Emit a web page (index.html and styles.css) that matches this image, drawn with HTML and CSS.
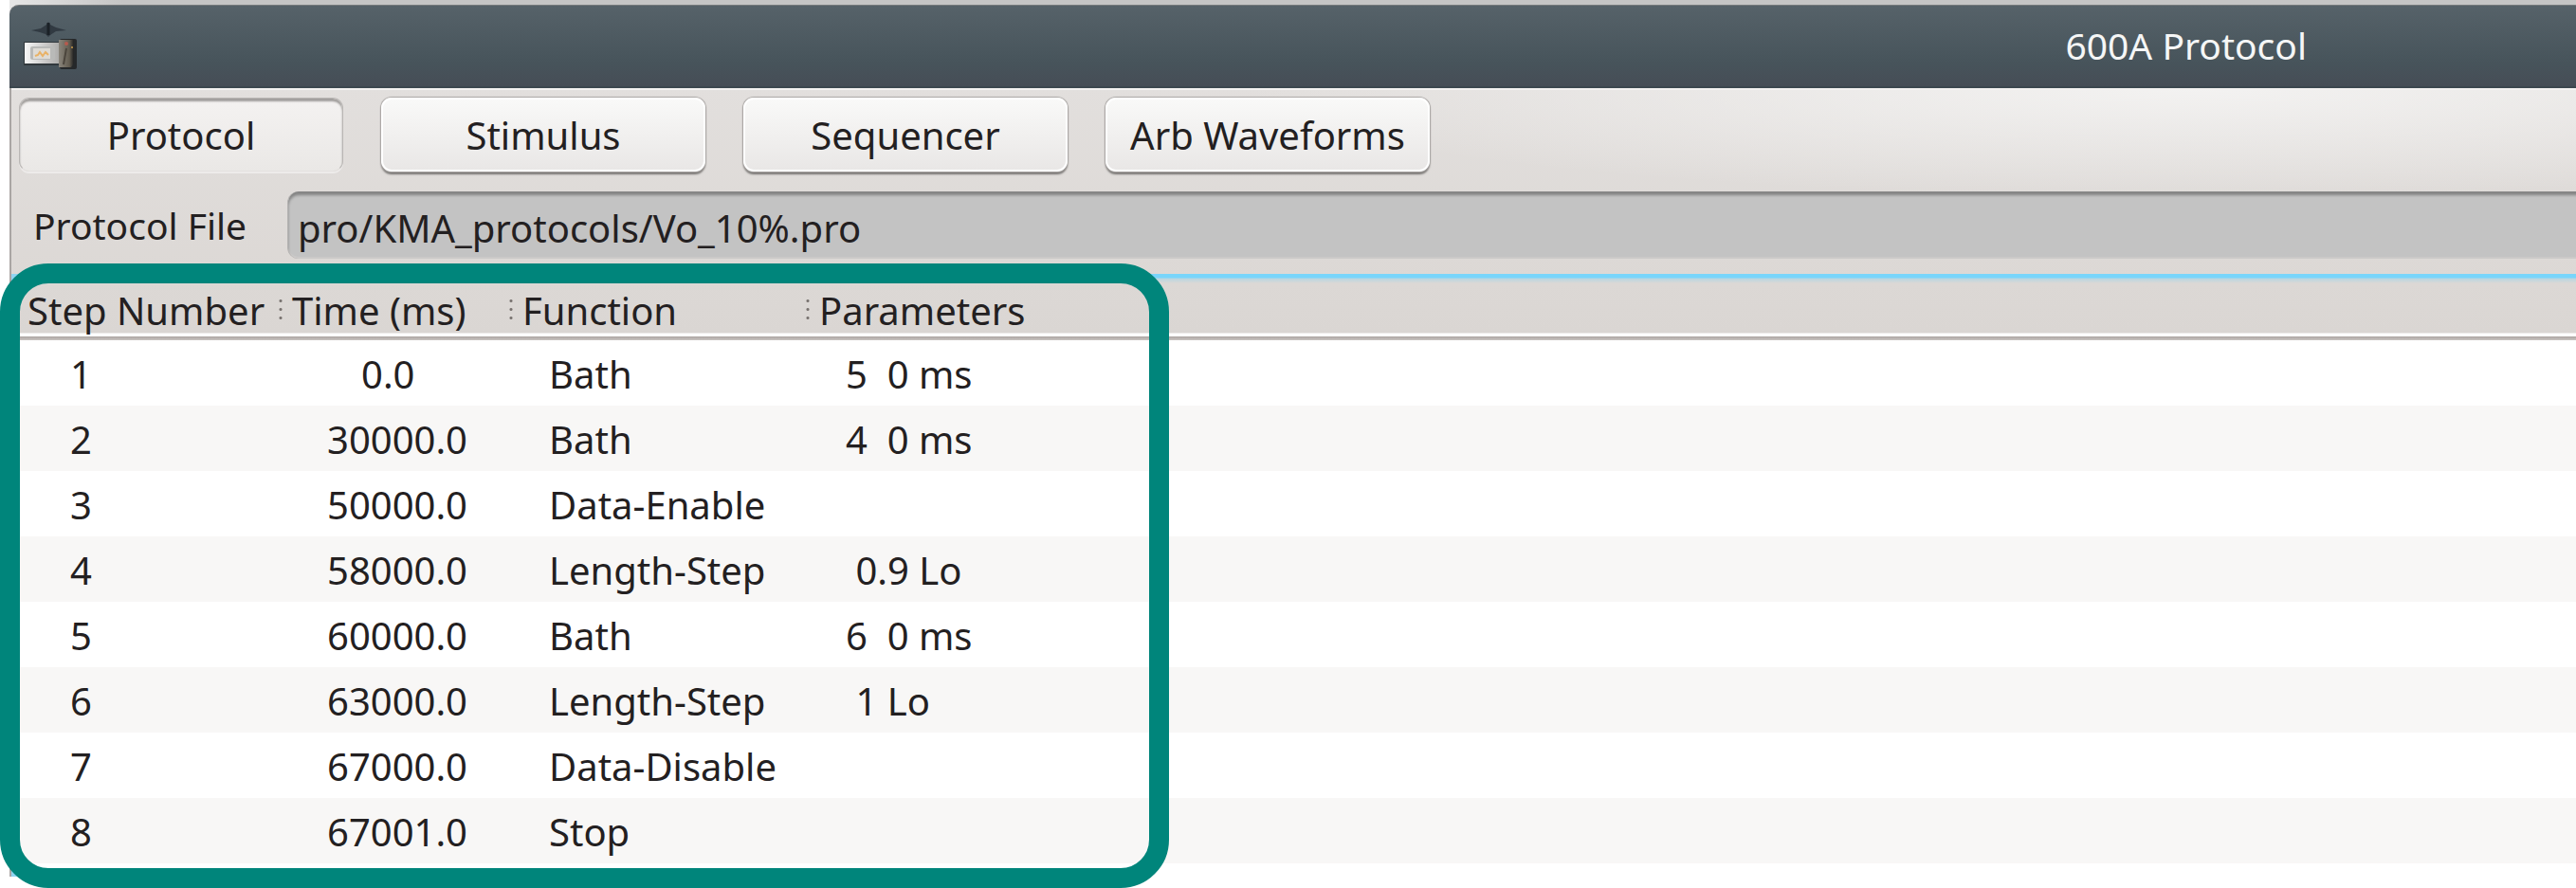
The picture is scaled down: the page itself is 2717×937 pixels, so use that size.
FILE: index.html
```html
<!DOCTYPE html>
<html lang="en">
<head>
    <meta charset="UTF-8">
    <meta name="viewport" content="width=device-width, initial-scale=1.0">
    <title>600A Protocol</title>
    <link rel="stylesheet" href="styles.css">
</head>
<body>
    <div class="desktop">
        <div class="window">
            <header class="titlebar">
                <svg class="app-icon" viewBox="0 0 60 52" aria-hidden="true">
                    <defs>
                        <linearGradient id="case" x1="0" y1="0" x2="1" y2="0">
                            <stop offset="0" stop-color="#f7f7f7"/>
                            <stop offset="1" stop-color="#aaa9a7"/>
                        </linearGradient>
                        <linearGradient id="motor" x1="0" y1="0" x2="1" y2="0">
                            <stop offset="0" stop-color="#8b867c"/>
                            <stop offset="0.7" stop-color="#625c50"/>
                            <stop offset="1" stop-color="#1f2021"/>
                        </linearGradient>
                    </defs>
                    <path d="M8 10 L18 8 L24 4 L26 1 L28 4 L34 7 L45 10 L34 11 L28 15 L26 17 L23 14 L17 12 Z" fill="#313a42"/>
                    <path d="M26 2 V15" stroke="#1b2127" stroke-width="3"/>
                    <rect x="0" y="22" width="40" height="25" fill="#32393d"/>
                    <rect x="38" y="19" width="18" height="32" rx="2" fill="#25282a"/>
                    <rect x="1" y="23" width="38" height="22" fill="url(#case)"/>
                    <rect x="7" y="27" width="26" height="14" rx="2" fill="#b9bab8"/>
                    <rect x="10" y="29" width="18" height="11" fill="#dedbd5"/>
                    <path d="M12 37 L15 36 L17 33 L20 37 L23 33 L26 36" fill="none" stroke="#e9b266" stroke-width="2"/>
                    <path d="M37 20 H53 V45 L50 49 H37 Z" fill="url(#motor)"/>
                    <path d="M45 29 L42 46" stroke="#4c463d" stroke-width="2"/>
                    <circle cx="45" cy="24" r="2" fill="#b65a4d"/>
                    <circle cx="51" cy="28" r="1" fill="#c99a48"/>
                </svg>
                <h1 class="title">600A Protocol</h1>
            </header>

            <nav class="tabs">
                <button type="button" class="tab active" aria-pressed="true">Protocol</button>
                <button type="button" class="tab">Stimulus</button>
                <button type="button" class="tab">Sequencer</button>
                <button type="button" class="tab">Arb Waveforms</button>
            </nav>

            <div class="file-row">
                <label for="protocol-file">Protocol File</label>
                <input type="text" id="protocol-file" value="pro/KMA_protocols/Vo_10%.pro" readonly>
            </div>

            <section class="list">
                <table class="steps">
                    <colgroup>
                        <col class="col-step">
                        <col class="col-time">
                        <col class="col-function">
                        <col>
                    </colgroup>
                    <thead>
                        <tr><th>Step Number</th><th>Time (ms)</th><th>Function</th><th>Parameters</th></tr>
                    </thead>
                    <tbody>
                        <tr><td>1</td><td class="zero">0.0</td><td>Bath</td><td>5  0 ms</td></tr>
                        <tr><td>2</td><td>30000.0</td><td>Bath</td><td>4  0 ms</td></tr>
                        <tr><td>3</td><td>50000.0</td><td>Data-Enable</td><td></td></tr>
                        <tr><td>4</td><td>58000.0</td><td>Length-Step</td><td> 0.9 Lo</td></tr>
                        <tr><td>5</td><td>60000.0</td><td>Bath</td><td>6  0 ms</td></tr>
                        <tr><td>6</td><td>63000.0</td><td>Length-Step</td><td> 1 Lo</td></tr>
                        <tr><td>7</td><td>67000.0</td><td>Data-Disable</td><td></td></tr>
                        <tr><td>8</td><td>67001.0</td><td>Stop</td><td></td></tr>
                    </tbody>
                </table>
                <div class="highlight"></div>
            </section>
        </div>
    </div>
</body>
</html>
```

FILE: styles.css
```css
* {
    box-sizing: border-box;
}

body {
    margin: 0;
    background: #fff;
    color: #232021;
    font-family: "Noto Sans", sans-serif;
    font-size: 40px;
    line-height: 52px;
}

.desktop {
    margin-left: 10px;
    padding: 5px 0 12px;
    background: linear-gradient(90deg, #e6e6e6, #c5c5c5 120px) top / 100% 20px no-repeat;
}

.window {
    border-left: 2px solid #aaa6a4;
    border-radius: 10px 0 0 0;
    background:
        radial-gradient(ellipse 1000px 115px at 85% 88px, #f3f2f1, rgba(243, 242, 241, 0)),
        linear-gradient(#e2dfdd 88px, #dcd8d5 290px);
}

/* title bar */
.titlebar {
    position: relative;
    height: 88px;
    padding: 16px 0 0 14px;
    border-top: 1px solid #75797b;
    border-bottom: 2px solid #3c474f;
    border-radius: 10px 0 0 0;
    margin-left: -2px;
    background: linear-gradient(#566269, #47545b 70%, #464d56);
}

.app-icon {
    position: absolute;
    left: 15px;
    top: 16px;
    width: 60px;
    height: 52px;
}

.title {
    margin: 0 0 0 80%;
    color: #f5f6f6;
    font-size: 39px;
    font-weight: normal;
    line-height: 52px;
    white-space: nowrap;
}

/* tabs */
.tabs {
    display: flex;
    gap: 40px;
    padding: 8px 8px 21px;
    border-top: 2px solid #f3f1f0;
}

.tab {
    width: 342px;
    height: 78px;
    padding: 2px 0 0;
    border: 2px solid #fff;
    border-radius: 11px;
    background: linear-gradient(#f9f9f8, #e9e7e6);
    box-shadow: 0 0 1px 1px #aaa7a5, 0 3px 2px #777472;
    color: inherit;
    font: inherit;
}

.tab.active {
    border: 1px solid #b9b6b4;
    border-bottom-color: #e4e1df;
    background: linear-gradient(#f4f2f1, #eae8e6);
    box-shadow: inset 0 3px 2px #a19e9c, 0 2px 0 #edebea;
}

/* protocol file */
.file-row {
    display: flex;
    align-items: center;
    height: 71px;
    overflow: hidden;
}

.file-row label {
    width: 291px;
    padding-left: 23px;
    font-size: 39px;
}

.file-row input {
    flex: 1;
    height: 71px;
    margin-right: -8px;
    padding: 5px 0 0 10px;
    border: 1px solid #b4b2b1;
    border-width: 0 0 0 1px;
    border-radius: 12px 0 0 12px;
    background: #c3c3c3;
    box-shadow: inset 0 4px 3px #858585, inset 0 -2px 1px #cccac9;
    color: inherit;
    font: inherit;
    outline: none;
}

/* step list */
.list {
    position: relative;
    margin-top: 16px;
    padding: 0 0 14px 8px;
    background: #fff;
    box-shadow: inset 8px 0 0 #8fd4f1;
}

.steps {
    width: 100%;
    table-layout: fixed;
    border-collapse: collapse;
    text-align: left;
    white-space: pre;
}

.col-step { width: 274px; }
.col-time { width: 243px; }
.col-function { width: 313px; }

.steps thead tr {
    height: 70px;
    background: linear-gradient(#78d5fb 4px, #b9d6e1 5px, #dcd8d5 10px, #dad6d3 62px, #fff 63px, #fff 66px, #aca5a2 66px, #c9c4c1);
}

.steps th {
    padding: 12px 0 4px 14px;
    font-weight: normal;
}

.steps th:first-child {
    padding-left: 9px;
}

/* dotted handle between the columns */
.steps th + th {
    background:
        radial-gradient(circle, #77716e 1px, transparent 2px) 0 24px / 4px 9px no-repeat,
        radial-gradient(circle, #77716e 1px, transparent 2px) 0 33px / 4px 9px no-repeat,
        radial-gradient(circle, #77716e 1px, transparent 2px) 0 42px / 4px 9px no-repeat;
}

.steps tbody tr {
    height: 69px;
}

.steps tbody tr:nth-child(even) {
    background: #f8f7f6;
}

.steps td {
    padding: 3px 0 0 42px;
}

.steps td:first-child {
    padding-left: 54px;
}

.steps td:nth-child(2) {
    padding-left: 51px;
}

.steps td.zero {
    padding-left: 87px;
}

.highlight {
    position: absolute;
    left: -12px;
    top: -11px;
    bottom: -12px;
    width: 1233px;
    border: 21px solid #00857b;
    border-radius: 51px;
}
```
